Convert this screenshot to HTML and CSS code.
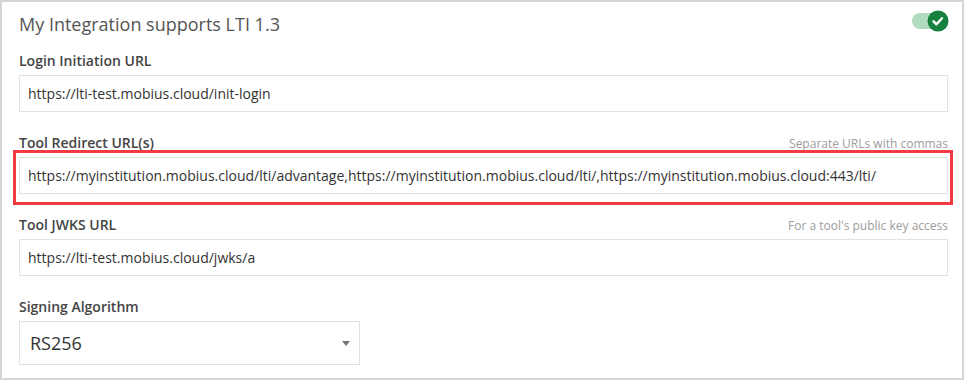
FILE: index.html
```html
<!DOCTYPE html>
<html lang="en">
<head>
  <meta charset="UTF-8">
  <title>LTI 1.3 Settings</title>
  <link rel="stylesheet" href="styles.css">
</head>
<body>
  <div class="panel">
    <div class="panel-header">
      <h2 class="panel-title">My Integration supports LTI 1.3</h2>
      <span class="toggle">
        <svg width="37" height="22" viewBox="0 0 37 22">
          <rect x="0" y="3" width="34" height="16" rx="8" fill="#b0dbbf"/>
          <circle cx="26" cy="11" r="10.5" fill="#16803e"/>
          <path d="M21.5 11.3l3 3 5.5-6" fill="none" stroke="#fff" stroke-width="2.4" stroke-linecap="round" stroke-linejoin="round"/>
        </svg>
      </span>
    </div>

    <div class="field">
      <div class="field-label">
        <label>Login Initiation URL</label>
      </div>
      <div class="input">https://lti-test.mobius.cloud/init-login</div>
    </div>

    <div class="field">
      <div class="field-label">
        <label>Tool Redirect URL(s)</label>
        <span class="hint">Separate URLs with commas</span>
      </div>
      <div class="input highlighted">https://myinstitution.mobius.cloud/lti/advantage,https://myinstitution.mobius.cloud/lti/,https://myinstitution.mobius.cloud:443/lti/</div>
    </div>

    <div class="field">
      <div class="field-label">
        <label>Tool JWKS URL</label>
        <span class="hint">For a tool's public key access</span>
      </div>
      <div class="input">https://lti-test.mobius.cloud/jwks/a</div>
    </div>

    <div class="field">
      <div class="field-label">
        <label>Signing Algorithm</label>
      </div>
      <div class="select">
        <span>RS256</span>
        <span class="caret"></span>
      </div>
    </div>
  </div>
</body>
</html>
```

FILE: styles.css
```css
* {
  box-sizing: border-box;
}

body {
  margin: 0;
  font-family: "Open Sans", Arial, sans-serif;
  background-color: #fff;
}

.panel {
  width: 964px;
  height: 380px;
  border: 2px solid #d5d5d5;
  padding: 9px 14px 0 17px;
  overflow: hidden;
}

.panel-header {
  display: flex;
  justify-content: space-between;
  align-items: flex-start;
  margin-bottom: 14px;
}

.panel-title {
  margin: 0;
  font-size: 18px;
  font-weight: 400;
  line-height: 26px;
  color: #555;
}

.toggle {
  display: block;
  margin-top: -1px;
  margin-right: -1px;
  height: 22px;
}

.toggle svg {
  display: block;
}

.field {
  margin-bottom: 21px;
}

.field-label {
  display: flex;
  justify-content: space-between;
  align-items: baseline;
  margin-bottom: 4px;
}

.field-label label {
  font-size: 14px;
  font-weight: 600;
  line-height: 20px;
  color: #444;
}

.hint {
  font-size: 12px;
  color: #9c9c9c;
}

.input {
  position: relative;
  height: 37px;
  border: 1px solid #e2e2e2;
  padding: 7px 8px;
  font-size: 14px;
  line-height: 21px;
  color: #333;
  white-space: nowrap;
}

.highlighted::after {
  content: "";
  position: absolute;
  top: -8px;
  left: -7px;
  right: -6px;
  bottom: -12px;
  border: 3px solid #f23a42;
}

.select {
  display: flex;
  justify-content: space-between;
  align-items: center;
  width: 341px;
  height: 44px;
  border: 1px solid #e2e2e2;
  padding: 0 9px 0 10px;
  font-size: 18px;
  color: #333;
}

.caret {
  width: 0;
  height: 0;
  border-left: 4px solid transparent;
  border-right: 4px solid transparent;
  border-top: 5px solid #777;
}
```
